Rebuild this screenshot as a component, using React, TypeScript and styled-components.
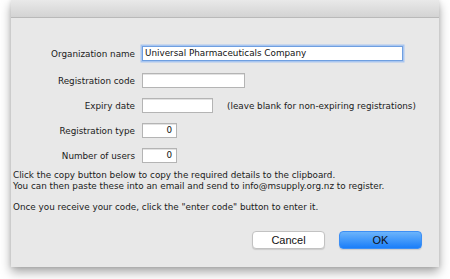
import React from 'react'
import styled, { createGlobalStyle } from 'styled-components'

const Global = createGlobalStyle`
  html, body {
    margin: 0;
    padding: 0;
    background: #ffffff;
  }
`

type Field = { label: string; value: string; width: number; numeric?: boolean; focused?: boolean; hint?: string }

const fields: Field[] = [
  { label: 'Organization name', value: 'Universal Pharmaceuticals Company', width: 261, focused: true },
  { label: 'Registration code', value: '', width: 103 },
  { label: 'Expiry date', value: '', width: 71, hint: '(leave blank for non-expiring registrations)' },
  { label: 'Registration type', value: '0', width: 35, numeric: true },
  { label: 'Number of users', value: '0', width: 35, numeric: true },
]

const App = () => {
  return (
    <Page>
      <Global />
      <Window>
        <TitleBar />
        <Body>
          <Form>
            {fields.map((f) => (
              <Row key={f.label} $first={f.focused}>
                <Label>{f.label}</Label>
                <Cell>
                  <Input $w={f.width} $numeric={f.numeric} $focused={f.focused}>{f.value}</Input>
                  {f.hint && <Hint>{f.hint}</Hint>}
                </Cell>
              </Row>
            ))}
          </Form>
          <Notes>
            <Line>Click the copy button below to copy the required details to the clipboard.</Line>
            <Line>You can then paste these into an email and send to info@msupply.org.nz to register.</Line>
            <Gap />
            <Line>Once you receive your code, click the "enter code" button to enter it.</Line>
          </Notes>
          <Buttons>
            <Button>Cancel</Button>
            <Button $primary>OK</Button>
          </Buttons>
        </Body>
      </Window>
    </Page>
  )
}

export default App

const Page = styled.div`
  width: 450px;
  height: 279px;
  overflow: hidden;
  padding-left: 11px;
  box-sizing: border-box;
`
const Window = styled.div`
  width: 428px;
  height: 267px;
  background: #e8e8e8;
  box-shadow: 0 5px 10px rgba(0, 0, 0, 0.35), 0 0 4px rgba(0, 0, 0, 0.12);
  display: flex;
  flex-direction: column;
`
const TitleBar = styled.div`
  height: 17px;
  background: linear-gradient(#e9e9e9, #d3d3d3);
  border-bottom: 1px solid #b9b9b9;
`
const Body = styled.div`
  flex: 1;
  display: flex;
  flex-direction: column;
  padding: 28px 17px 0 2px;
  font-family: "DejaVu Sans", sans-serif;
  font-size: 8.8px;
  color: #1a1a1a;
`
const Form = styled.div`
  display: flex;
  flex-direction: column;
  gap: 10px;
`
const Row = styled.div<{ $first?: boolean }>`
  display: grid;
  grid-template-columns: 122px auto;
  column-gap: 7px;
  align-items: center;
  height: 15px;
  margin-bottom: ${(p) => (p.$first ? '2px' : '0')};
`
const Label = styled.div`
  text-align: right;
  white-space: nowrap;
`
const Cell = styled.div`
  display: flex;
  align-items: center;
  gap: 14px;
`
const Input = styled.div<{ $w: number; $numeric?: boolean; $focused?: boolean }>`
  width: ${(p) => p.$w}px;
  height: 15px;
  box-sizing: border-box;
  background: #fff;
  border: 1px solid ${(p) => (p.$focused ? '#6f9fe0' : '#b4b4b4')};
  box-shadow: ${(p) => (p.$focused ? '0 0 0 1.5px #a9c6f0' : 'inset 0 1px 0 #e2e2e2')};
  padding: 0 4px 0 2px;
  line-height: 13px;
  text-align: ${(p) => (p.$numeric ? 'right' : 'left')};
  white-space: nowrap;
  color: #111;
`
const Hint = styled.div`
  white-space: nowrap;
`
const Notes = styled.div`
  margin-top: 7px;
  display: flex;
  flex-direction: column;
`
const Line = styled.div`
  line-height: 11px;
  white-space: nowrap;
`
const Gap = styled.div`
  height: 10px;
`
const Buttons = styled.div`
  margin-top: 18px;
  display: flex;
  justify-content: flex-end;
  gap: 14px;
`
const Button = styled.div<{ $primary?: boolean }>`
  width: ${(p) => (p.$primary ? '83px' : '73px')};
  height: 18px;
  box-sizing: border-box;
  border-radius: 4px;
  font-family: "Liberation Sans", Arial, sans-serif;
  font-size: 11px;
  line-height: 16px;
  text-align: center;
  color: #111;
  background: ${(p) => (p.$primary ? 'linear-gradient(#6cb4fb, #1a7ef9)' : '#ffffff')};
  border: 1px solid ${(p) => (p.$primary ? '#3d8ff5' : '#c2c2c2')};
  box-shadow: 0 1px 1px rgba(0, 0, 0, 0.12);
`
